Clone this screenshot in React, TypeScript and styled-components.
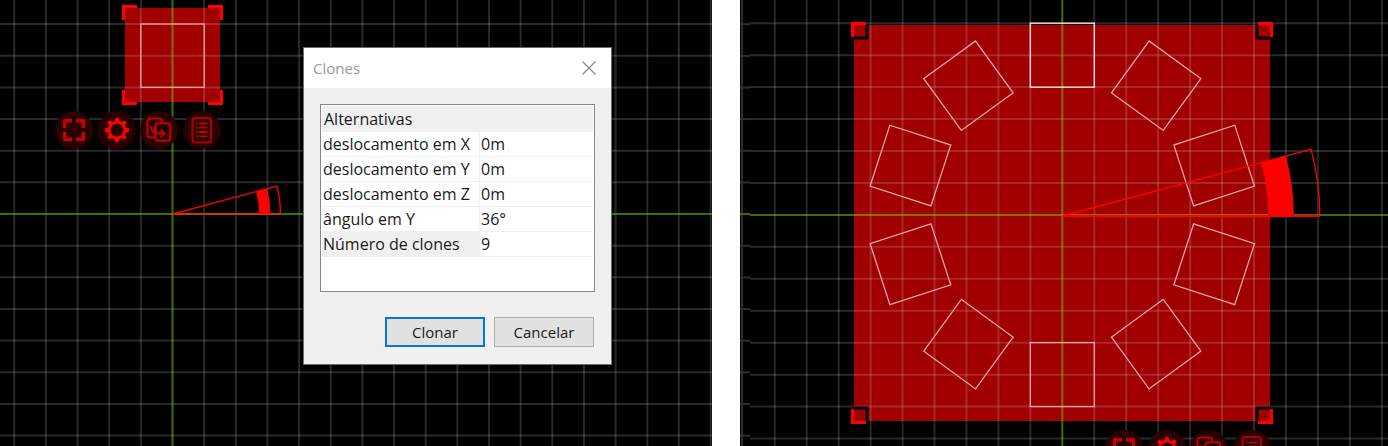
import React from "react";
import styled, { createGlobalStyle } from "styled-components";

const GlobalStyle = createGlobalStyle`
  *, *::before, *::after { box-sizing: border-box; }
  body { margin: 0; background: #fff; }
`;

const Page = styled.main`
  display: grid;
  grid-template-columns: 712fr 648fr;
  gap: 28px;
  min-height: 100vh;
  font: 16px/24px "Open Sans", "Noto Sans", sans-serif;
  color: #1a1a1a;
`;

const Viewport = styled.section`
  position: relative;
  overflow: hidden;
  min-width: 0;
  background: #000;
`;

const Scene = styled.svg`
  position: absolute;
  inset: 0;
  width: 100%;
  height: 100%;
`;

const ToolBar = styled.div<{ $left: number; $top: number }>`
  position: absolute;
  left: ${(p) => p.$left}px;
  top: ${(p) => p.$top}px;
  width: 166px;
  display: flex;
  justify-content: space-between;
`;

const ToolButton = styled.button<{ $bright?: boolean }>`
  width: 38px;
  height: 38px;
  padding: 0;
  border: 0;
  border-radius: 50%;
  background: rgba(42, 0, 0, 0.94);
  color: ${(p) => (p.$bright ? "#ff0000" : "#c40000")};

  svg { display: block; }
`;

const Dialog = styled.form`
  position: absolute;
  left: 303px;
  top: 47px;
  width: 309px;
  border: 1px solid #6c6c6c;
  background: #f0f0f0;
`;

const TitleBar = styled.header`
  display: flex;
  align-items: center;
  justify-content: space-between;
  height: 40px;
  padding: 0 14px 0 9px;
  background: #fff;
`;

const Title = styled.h1`
  margin: 0;
  font-size: 15px;
  font-weight: 400;
  color: #999;
`;

const CloseButton = styled.button`
  padding: 0;
  border: 0;
  background: none;
  color: #888;

  svg { display: block; }
`;

const DialogBody = styled.div`
  padding: 16px 16px 17px;
`;

const PropertyBox = styled.div`
  height: 188px;
  padding: 1px;
  border: 1px solid #828790;
  background: #fff;
`;

const PropertyTable = styled.table`
  width: 100%;
  border-collapse: separate;
  border-spacing: 0;
  table-layout: fixed;
`;

const NameColumn = styled.col`
  width: 158px;
`;

const GroupHeading = styled.th`
  height: 26px;
  padding: 0 2px;
  background: #f0f0f0;
  font-weight: 400;
  line-height: 24px;
  text-align: left;
`;

const NameCell = styled.th<{ $selected?: boolean }>`
  height: 25px;
  padding: 0 1px;
  border-right: 1px solid #f0f0f0;
  border-bottom: 1px solid #f0f0f0;
  background: ${(p) => (p.$selected ? "#f0f0f0" : "#fff")};
  font-weight: 400;
  text-align: left;
  white-space: nowrap;
`;

const ValueCell = styled.td`
  height: 25px;
  padding: 0;
  border-bottom: 1px solid #f0f0f0;
`;

const ValueInput = styled.input`
  display: block;
  width: 100%;
  height: 24px;
  padding: 0 1px;
  border: 0;
  outline: 0;
  background: none;
  font: inherit;
  color: inherit;
`;

const Actions = styled.footer`
  display: flex;
  justify-content: flex-end;
  gap: 9px;
  padding: 25px 1px 0 0;
`;

const ActionButton = styled.button<{ $primary?: boolean }>`
  width: 100px;
  height: 30px;
  padding: 0;
  border: ${(p) => (p.$primary ? "2px solid #0078d7" : "1px solid #adadad")};
  background: #e1e1e1;
  font: inherit;
  font-size: 15px;
  color: inherit;
`;

const SELECTION = "#a00000";
const RED = "#ff0000";

type Point = { x: number; y: number };

function Grid({ origin, step }: { origin: Point; step: number }) {
  const range = Array.from({ length: 81 }, (_, i) => i - 40).filter((i) => i !== 0);
  return (
    <g>
      <g stroke="rgb(200,205,205)" strokeOpacity="0.2" strokeWidth="2">
        {range.map((i) => (
          <line key={`v${i}`} x1={origin.x + i * step} x2={origin.x + i * step} y1="0" y2="100%" />
        ))}
        {range.map((i) => (
          <line key={`h${i}`} x1="0" x2="100%" y1={origin.y + i * step} y2={origin.y + i * step} />
        ))}
      </g>
      <g stroke="rgb(115,200,0)" strokeOpacity="0.55" strokeWidth="2">
        <line x1={origin.x} x2={origin.x} y1="0" y2="100%" />
        <line x1="0" x2="100%" y1={origin.y} y2={origin.y} />
      </g>
    </g>
  );
}

function AngleHandle({ origin, radius, inner, outer, base }: {
  origin: Point; radius: number; inner: number; outer: number; base: string;
}) {
  const c = Math.cos(Math.PI / 12);
  const s = Math.sin(Math.PI / 12);
  const { x, y } = origin;
  const band =
    `M${x + inner} ${y} A${inner} ${inner} 0 0 0 ${x + inner * c} ${y - inner * s}` +
    `L${x + outer * c} ${y - outer * s} A${outer} ${outer} 0 0 1 ${x + outer} ${y} Z`;
  const edge = `M${x} ${y} L${x + radius * c} ${y - radius * s} A${radius} ${radius} 0 0 1 ${x + radius} ${y}`;
  return (
    <g fill="none">
      <path d={`M${x} ${y} H${x + radius}`} stroke={base} strokeWidth="2" />
      <path d={edge} stroke={RED} strokeWidth="1.3" />
      <path d={band} fill={RED} />
    </g>
  );
}

/* Corner marks sit 3px outside the selected area. */
function CornerMarks({ x, y, width, height, notched }: {
  x: number; y: number; width: number; height: number; notched?: boolean;
}) {
  const corners = [
    [x, y, 1, 1],
    [x + width, y, -1, 1],
    [x, y + height, 1, -1],
    [x + width, y + height, -1, -1],
  ];
  return (
    <g>
      {corners.map(([cx, cy, sx, sy]) => (
        <g key={`${cx},${cy}`} transform={`translate(${cx} ${cy}) scale(${sx} ${sy})`}>
          {notched && <rect x="-1" y="-1" width="15.5" height="15.5" fill="#000" />}
          {notched && <rect width="11.5" height="11.5" fill={SELECTION} />}
          <path d="M-3 -3 H12 V0 H0 V12 H-3 Z" fill={RED} />
        </g>
      ))}
    </g>
  );
}

function ExpandIcon() {
  return (
    <svg width="38" height="38" viewBox="0 0 38 38" fill="none" stroke="currentColor" strokeWidth="3.4" aria-hidden="true">
      <path d="M9.7 17 V9.7 H17 M21 9.7 H28.3 V17 M28.3 21 V28.3 H21 M17 28.3 H9.7 V21" />
    </svg>
  );
}

function GearIcon() {
  return (
    <svg width="38" height="38" viewBox="-19 -19 38 38" aria-hidden="true">
      <circle r="7.9" fill="none" stroke="currentColor" strokeWidth="2.6" />
      {[0, 45, 90, 135, 180, 225, 270, 315].map((a) => (
        <path key={a} transform={`rotate(${a})`} fill="currentColor" d="M-3 -8 L-1.4 -12.2 H1.4 L3 -8 Z" />
      ))}
    </svg>
  );
}

function CloneIcon() {
  return (
    <svg width="38" height="38" viewBox="-19 -19 38 38" fill="none" stroke="currentColor" strokeWidth="2" aria-hidden="true">
      <path d="M-5 7.5 H-9 Q-11.5 7.5 -11.5 5 V-8.5 Q-11.5 -11.5 -8.5 -11.5 H0 Q3 -11.5 3 -8.5 V-8" />
      <rect x="-3.7" y="-6.7" width="15" height="17.5" rx="3" />
      <path d="M-8 -3.5 Q-7 3.5 -1 3.5 H5 M1.7 -0.2 L5.5 3.5 L1.7 7.2 M-5 -1 L-2 1.5" />
    </svg>
  );
}

function ListIcon() {
  return (
    <svg width="38" height="38" viewBox="-19 -19 38 38" fill="none" stroke="currentColor" aria-hidden="true">
      <rect x="-9.5" y="-12" width="18.5" height="24.5" rx="3" strokeWidth="2.2" strokeOpacity="0.85" />
      <path d="M-6 -6.5 H-4.3 M-3 -6.5 H5.5 M-6 -2.3 H-4.3 M-3 -2.3 H5.5 M-6 2 H-4.3 M-3 2 H5.5 M-6 6.3 H-4.3 M-3 6.3 H5.5" strokeWidth="1.8" />
    </svg>
  );
}

function ObjectTools({ left, top }: { left: number; top: number }) {
  return (
    <ToolBar $left={left} $top={top} role="toolbar">
      <ToolButton type="button" aria-label="Enquadrar"><ExpandIcon /></ToolButton>
      <ToolButton type="button" aria-label="Configurar" $bright><GearIcon /></ToolButton>
      <ToolButton type="button" aria-label="Clonar"><CloneIcon /></ToolButton>
      <ToolButton type="button" aria-label="Propriedades"><ListIcon /></ToolButton>
    </ToolBar>
  );
}

const properties = [
  { id: "dx", name: "deslocamento em X", value: "0m" },
  { id: "dy", name: "deslocamento em Y", value: "0m" },
  { id: "dz", name: "deslocamento em Z", value: "0m" },
  { id: "angle", name: "ângulo em Y", value: "36°" },
  { id: "count", name: "Número de clones", value: "9", selected: true },
];

function ClonesDialog() {
  return (
    <Dialog role="dialog" aria-labelledby="clones-title" onSubmit={(e) => e.preventDefault()}>
      <TitleBar>
        <Title id="clones-title">Clones</Title>
        <CloseButton type="button" aria-label="Fechar">
          <svg width="16" height="16" viewBox="0 0 16 16" stroke="currentColor" strokeWidth="1.2">
            <path d="M1.5 1.5 L14.5 14.5 M14.5 1.5 L1.5 14.5" />
          </svg>
        </CloseButton>
      </TitleBar>
      <DialogBody>
        <PropertyBox>
          <PropertyTable>
            <colgroup>
              <NameColumn />
              <col />
            </colgroup>
            <thead>
              <tr><GroupHeading colSpan={2}>Alternativas</GroupHeading></tr>
            </thead>
            <tbody>
              {properties.map((p) => (
                <tr key={p.id}>
                  <NameCell scope="row" $selected={p.selected}>
                    <label htmlFor={p.id}>{p.name}</label>
                  </NameCell>
                  <ValueCell><ValueInput id={p.id} defaultValue={p.value} /></ValueCell>
                </tr>
              ))}
            </tbody>
          </PropertyTable>
        </PropertyBox>
        <Actions>
          <ActionButton type="submit" $primary>Clonar</ActionButton>
          <ActionButton type="button">Cancelar</ActionButton>
        </Actions>
      </DialogBody>
    </Dialog>
  );
}

function SingleObjectScene() {
  const origin = { x: 172.5, y: 214 };
  return (
    <Scene aria-hidden="true">
      <rect x="125" y="8" width="95" height="94" fill={SELECTION} />
      <Grid origin={origin} step={31.65} />
      <CornerMarks x={125} y={8} width={95} height={94} />
      <rect x="140.8" y="24" width="63.4" height="63.3" fill="none" stroke="#e8a0a0" strokeWidth="1.3" />
      <AngleHandle origin={origin} radius={108} inner={86.5} outer={98} base="#c83c00" />
    </Scene>
  );
}

function ClonedRingScene() {
  const origin = { x: 322.3, y: 214.9 };
  const edgeLines = Array.from({ length: 15 }, (_, i) => 24.2 + (i - 1) * 31.65);
  return (
    <Scene aria-hidden="true">
      <rect x="114" y="25" width="416" height="396" fill={SELECTION} />
      <Grid origin={origin} step={31.95} />
      {/* The narrow strip at the left edge keeps the coarser view's spacing. */}
      <rect width="10" height="100%" fill="#000" />
      <g stroke="#2e2e2e" strokeWidth="2">
        <line x1="2" x2="2" y1="0" y2="100%" />
        {edgeLines.map((y) => <line key={y} x1="0" x2="10" y1={y} y2={y} />)}
      </g>
      <line x1="0" x2="10" y1="214" y2="214" stroke="#3c6e00" strokeWidth="2" />
      <CornerMarks x={114} y={25} width={416} height={396} notched />
      <g fill="none" strokeWidth="1.3">
        {Array.from({ length: 10 }, (_, i) => (
          <rect
            key={i}
            x={origin.x - 32}
            y={origin.y - 191.7}
            width="64"
            height="64"
            stroke={i === 0 ? "#ffe8e8" : "#eba0a0"}
            transform={`rotate(${i * 36} ${origin.x} ${origin.y})`}
          />
        ))}
      </g>
      <AngleHandle origin={{ x: origin.x, y: 216 }} radius={257.5} inner={206} outer={231.5} base={RED} />
    </Scene>
  );
}

export default function App() {
  return (
    <>
      <GlobalStyle />
      <Page>
        <Viewport>
          <SingleObjectScene />
          <ObjectTools left={55} top={111} />
          <ClonesDialog />
        </Viewport>
        <Viewport>
          <ClonedRingScene />
          <ObjectTools left={365} top={430} />
        </Viewport>
      </Page>
    </>
  );
}
